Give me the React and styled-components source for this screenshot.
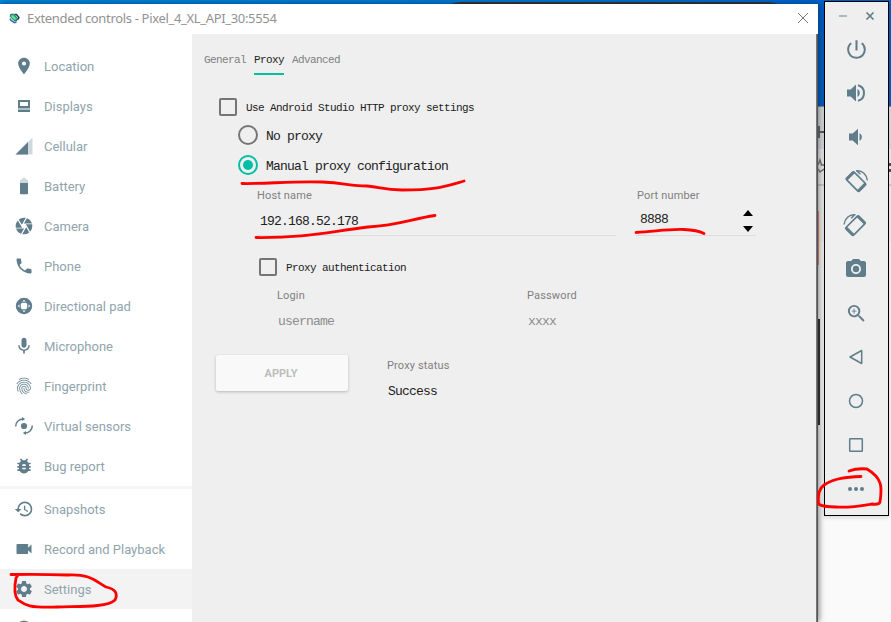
import React from 'react';
import styled, { createGlobalStyle, css } from 'styled-components';
import {
  MdLocationOn, MdCamera, MdPhone, MdMic, MdFingerprint, MdBugReport, MdHistory,
  MdVideocam, MdSettings, MdHelp, MdPhotoCamera, MdZoomIn, MdPowerSettingsNew,
} from 'react-icons/md';

const SLATE = '#607d8b';
const TEAL = '#00bfa5';

const GlobalStyle = createGlobalStyle`
  * { box-sizing: border-box; }
  body { margin: 0; overflow: hidden; font-family: Roboto, sans-serif; }
  svg { display: block; flex: none; }
`;

const Desktop = styled.main`
  position: relative;
  width: 891px;
  height: 622px;
  overflow: hidden;
  background: linear-gradient(90deg, #0085dc 0, #0078d7 55%, #0063cc 92%, #0062ca 100%);
`;

const PhoneEdge = styled.div`
  position: absolute;
  left: 450px;
  top: 2px;
  width: 328px;
  height: 20px;
  border-radius: 14px 14px 0 0 / 3px;
  background: #33383c;
`;

const BackWindow = styled.div`
  position: absolute;
  left: 816px;
  top: 106px;
  width: 75px;
  height: 516px;
  border-top: 1px solid #8b9096;
  background: linear-gradient(#dedfe4 0 42px, #f1f1f2 42px 77px, #cfcfd0 77px 79px, #f3f3f3 79px 135px, #fafafa 135px);
`;

const BackDetails = styled.svg`
  position: absolute;
  left: 0;
  top: 0;
`;

const Window = styled.section`
  position: absolute;
  left: 0;
  top: 4px;
  width: 818px;
  height: 618px;
  background: #fff;
  box-shadow: 1px 0 6px rgba(0, 0, 0, 0.5);
`;

const TitleBar = styled.header`
  display: flex;
  align-items: center;
  height: 30px;
  padding: 0 9px 2px 9px;
  gap: 7px;
`;

const Title = styled.h1`
  flex: 1;
  margin: 0;
  font: 400 13px/20px "Noto Sans", sans-serif;
  letter-spacing: -0.33px;
  color: #929292;
`;

const WindowBody = styled.div`
  display: flex;
  height: 588px;
`;

const Sidebar = styled.nav`
  width: 192px;
  padding-top: 12px;
  background: #fff;
  overflow: hidden;
`;

const NavItem = styled.div`
  display: flex;
  align-items: center;
  height: 40px;
  padding-left: 14px;
  gap: 10px;
  font-size: 13px;
  color: #90a4ae;
  background: ${(p) => (p.$active ? '#f3f3f3' : 'transparent')};
  svg { color: ${SLATE}; }
`;

const NavDivider = styled.div`
  height: 3px;
  background: #f5f5f5;
`;

const Panel = styled.div`
  width: 625px;
  height: 588px;
  padding: 16px 0 0 12px;
  background: #efefef;
  border-right: 1px solid #777;
  box-shadow: 1px 0 #505458;
`;

const bitmapText = css`
  font-family: "Liberation Mono", monospace;
  font-size: ${(p) => (p.$small ? 11 : 13)}px;
  letter-spacing: ${(p) => (p.$small ? -0.6 : -0.8)}px;
  white-space: pre;
`;

const Tabs = styled.div`
  display: flex;
  gap: 8px;
`;

const Tab = styled.div`
  ${bitmapText}
  height: 25px;
  line-height: 20px;
  color: ${(p) => (p.$active ? '#212121' : '#808080')};
  border-bottom: 2px solid ${(p) => (p.$active ? TEAL : 'transparent')};
`;

const Option = styled.label`
  display: flex;
  align-items: center;
  height: ${(p) => p.$height}px;
  gap: ${(p) => (p.$check ? 9 : 8)}px;
  margin: ${(p) => p.$top || 0}px 0 0 ${(p) => p.$indent}px;
`;

const CheckBox = styled.span`
  width: 18px;
  height: 18px;
  border: 2px solid #757575;
  border-radius: 2px;
`;

const Radio = styled.span`
  display: grid;
  place-items: center;
  width: 20px;
  height: 20px;
  border: 2px solid ${(p) => (p.$on ? TEAL : '#757575')};
  border-radius: 50%;
  &::after {
    content: '';
    width: 10px;
    height: 10px;
    border-radius: 50%;
    background: ${(p) => (p.$on ? TEAL : 'transparent')};
  }
`;

const OptionText = styled.span`
  ${bitmapText}
  line-height: 18px;
  padding-top: ${(p) => (p.$small ? 2 : 3)}px;
  color: #212121;
`;

const FieldRow = styled.div`
  display: flex;
  margin: ${(p) => p.$top}px 0 0 ${(p) => p.$indent}px;
`;

const Field = styled.div`
  width: ${(p) => p.$width}px;
  margin-right: ${(p) => p.$gap || 0}px;
`;

const FieldLabel = styled.div`
  height: 16px;
  padding-left: ${(p) => p.$inset || 0}px;
  font-size: 11px;
  line-height: 16px;
  letter-spacing: 0.15px;
  color: #808080;
`;

const FieldValue = styled.div`
  ${bitmapText}
  display: flex;
  align-items: flex-start;
  justify-content: space-between;
  height: ${(p) => (p.$line ? 32 : 28)}px;
  padding: ${(p) => p.$padTop}px 3px 0 ${(p) => p.$inset || 1}px;
  line-height: 16px;
  color: ${(p) => (p.$muted ? '#8d8d8d' : '#212121')};
  border-bottom: 1px solid ${(p) => (p.$line ? '#dcdcdc' : 'transparent')};
`;

const SpinArrows = styled.svg`
  margin-top: -2px;
`;

const ActionRow = styled.div`
  display: flex;
  margin: 23px 0 0 12px;
  gap: 39px;
`;

const ApplyButton = styled.button`
  width: 132px;
  height: 36px;
  padding: 0 2px 0 0;
  border: 0;
  border-radius: 2px;
  background: #f9f9f9;
  box-shadow: 0 1px 3px rgba(0, 0, 0, 0.24);
  font: 700 11px Roboto, sans-serif;
  color: #bdbdbd;
`;

const Status = styled.div`
  padding-top: 3px;
`;

const Toolbar = styled.aside`
  position: absolute;
  left: 824px;
  top: 1px;
  width: 65px;
  height: 515px;
  border: 1px solid #000;
  background: #efefef;
  color: ${SLATE};
  box-shadow: 0 1px 5px rgba(0, 0, 0, 0.18);
`;

const ToolbarControls = styled.div`
  display: flex;
  justify-content: space-between;
  padding: 9px 13px 0 13px;
  height: 25px;
`;

const ToolButton = styled.div`
  display: grid;
  place-items: center;
  width: 62px;
  height: 44px;
`;

const Markup = styled.svg`
  position: absolute;
  inset: 0;
  pointer-events: none;
`;

function Svg({ size = 20, children }) {
  return (
    <svg width={size} height={size} viewBox="0 0 20 20" fill="currentColor">
      {children}
    </svg>
  );
}

const DisplaysIcon = () => (
  <Svg>
    <path fillRule="evenodd" d="M4 4h12v8H4zM6 6v4h8V6z" />
    <path opacity=".5" d="M4 12h12v2H4z" />
    <path d="M4 14h12v2H4z" />
  </Svg>
);
const CellularIcon = () => (
  <Svg>
    <path opacity=".3" d="M18.500 1.500v17h-17z" />
    <path d="M14 6v12.500H1.500z" />
  </Svg>
);
const BatteryIcon = () => (
  <Svg>
    <path opacity=".3" d="M8.300 1.700h3.400v1.700H13q1 0 1 1V7H6V4.400q0-1 1-1h1.300z" />
    <path d="M6 7h8v10.300q0 1-1 1H7q-1 0-1-1z" />
  </Svg>
);
const DpadIcon = () => (
  <Svg>
    <path fillRule="evenodd" d="M10 1.800a8.200 8.200 0 1 1 0 16.400a8.200 8.200 0 0 1 0-16.400M8.400 5.500h3.200L10 3.700zM8.400 14.500h3.200L10 16.300zM5.500 8.400v3.200L3.700 10zM14.500 8.400v3.200l1.800-1.600zM8 6.800L6.800 8v4L8 13.200h4l1.200-1.200V8L12 6.800z" />
  </Svg>
);
const SensorsIcon = () => (
  <Svg>
    <circle cx="10" cy="10" r="3.100" />
    <g fill="none" stroke="currentColor" strokeWidth="1.500">
      <path d="M1.700 10.500C1.700 6 5 2.900 9.500 2.900" />
      <path d="M18.300 9.500c0 4.500-3.300 7.600-7.800 7.600" />
    </g>
    <path d="M8 .9L11.200 3.100L8 4.900zM12 15.100v4l-3.200-2.200z" />
  </Svg>
);

const LoudIcon = () => (
  <Svg>
    <path d="M1 6.500h3.600L10 1.500v17l-5.400-5H1zM11.500 6c3 1.400 3 6.600 0 8z" />
    <path d="M12 2.200c8 2.100 8 13.500 0 15.600" fill="none" stroke="currentColor" strokeWidth="2" />
  </Svg>
);
const QuietIcon = () => (
  <Svg>
    <path d="M3 6.500h3.600L12 1.800v16.400l-5.400-4.700H3zM13.500 6.200c3.200 1.400 3.200 6.200 0 7.600z" />
  </Svg>
);
const RotateIcon = ({ flip }) => (
  <svg width="26" height="26" viewBox="0 0 26 26">
    <g fill="none" stroke="currentColor" transform={flip ? 'translate(25.500 0) scale(-1 1)' : undefined}>
      <g transform="translate(13 13.600) rotate(45)">
        <rect x="-9" y="-5.400" width="18" height="10.800" rx="1.300" strokeWidth="1.700" />
        <path d="M-8.200-5.400v10.800M8.200-5.400v10.800" strokeWidth="2.800" />
      </g>
      <path d="M13 2.800c6.500-.9 10.900 4.200 11.400 9.700M13.600 2.400l3.800 3.800" strokeWidth="1.400" />
    </g>
  </svg>
);
const BackIcon = () => (
  <Svg><path d="M15.700 3.500v13L4 10z" fill="none" stroke="currentColor" strokeWidth="1.500" strokeLinejoin="round" /></Svg>
);
const HomeIcon = () => (
  <Svg><circle cx="10" cy="10" r="6.500" fill="none" stroke="currentColor" strokeWidth="1.500" /></Svg>
);
const OverviewIcon = () => (
  <Svg><rect x="3.700" y="3.700" width="12.600" height="12.600" rx=".6" fill="none" stroke="currentColor" strokeWidth="1.500" /></Svg>
);
const MoreIcon = () => (
  <Svg>
    <circle cx="4" cy="10" r="2" /><circle cx="10" cy="10" r="2" /><circle cx="16" cy="10" r="2" />
  </Svg>
);

const EmulatorLogo = () => (
  <svg width="11" height="11" viewBox="0 0 11 11">
    <path d="M5.500 1.500L7.500 1.500L10 4.500L8.500 7" fill="#dbe7f2" stroke="#183b55" strokeWidth="1.400" />
    <path d="M1 5.500L2 7.500L5.500 9.700L7.500 9" fill="none" stroke="#386dad" strokeWidth="1.600" />
    <path d="M1.500 1.500L4.500 1L8.500 5.500L7.500 8L5 7.500L1.300 3.500z" fill="#35c583" stroke="#11684e" strokeWidth=".9" />
    <path d="M3 3l3 3" stroke="#79e6af" strokeWidth="1.600" />
  </svg>
);

const primaryNav = [
  ['Location', <MdLocationOn size={20} />],
  ['Displays', <DisplaysIcon />],
  ['Cellular', <CellularIcon />],
  ['Battery', <BatteryIcon />],
  ['Camera', <MdCamera size={20} />],
  ['Phone', <MdPhone size={20} />],
  ['Directional pad', <DpadIcon />],
  ['Microphone', <MdMic size={20} />],
  ['Fingerprint', <MdFingerprint size={20} />],
  ['Virtual sensors', <SensorsIcon />],
  ['Bug report', <MdBugReport size={20} />],
];

const secondaryNav = [
  ['Snapshots', <MdHistory size={20} />],
  ['Record and Playback', <MdVideocam size={20} />],
  ['Settings', <MdSettings size={20} />],
];

const tools = [
  <MdPowerSettingsNew size={25} />, <LoudIcon />, <QuietIcon />,
  <RotateIcon />, <RotateIcon flip />, <MdPhotoCamera size={24} />,
  <MdZoomIn size={23} />, <BackIcon />, <HomeIcon />, <OverviewIcon />, <MoreIcon />,
];

function ExtendedControls() {
  return (
    <Window>
      <TitleBar>
        <EmulatorLogo />
        <Title>Extended controls - Pixel_4_XL_API_30:5554</Title>
        <svg width="12" height="12" viewBox="0 0 12 12" stroke="#777" strokeWidth="1">
          <path d="M1 1l10 10M11 1L1 11" />
        </svg>
      </TitleBar>
      <WindowBody>
        <Sidebar>
          {primaryNav.map(([label, icon]) => <NavItem key={label}>{icon}{label}</NavItem>)}
          <NavDivider />
          {secondaryNav.map(([label, icon]) => (
            <NavItem key={label} $active={label === 'Settings'}>{icon}{label}</NavItem>
          ))}
          <NavItem><MdHelp size={20} /></NavItem>
        </Sidebar>
        <Panel>
          <Tabs>
            <Tab $small>General</Tab>
            <Tab $small $active>Proxy</Tab>
            <Tab $small>Advanced</Tab>
          </Tabs>
          <Option $check $height={18} $top={23} $indent={15}>
            <CheckBox /><OptionText $small>Use Android Studio HTTP proxy settings</OptionText>
          </Option>
          <Option $height={20} $top={9} $indent={34}>
            <Radio /><OptionText>No proxy</OptionText>
          </Option>
          <Option $height={20} $top={10} $indent={34}>
            <Radio $on /><OptionText>Manual proxy configuration</OptionText>
          </Option>
          <FieldRow $top={13} $indent={53}>
            <Field $width={359} $gap={20}>
              <FieldLabel>Host name</FieldLabel>
              <FieldValue $line $padTop={10} $inset={3}>192.168.52.178</FieldValue>
            </Field>
            <Field $width={120}>
              <FieldLabel $inset={1}>Port number</FieldLabel>
              <FieldValue $line $padTop={8} $inset={4}>
                8888
                <SpinArrows width="10" height="23" viewBox="0 0 10 23">
                  <path d="M5 0l5 6H0zM0 16h10l-5 6z" />
                </SpinArrows>
              </FieldValue>
            </Field>
          </FieldRow>
          <Option $check $height={18} $top={22} $indent={55}>
            <CheckBox /><OptionText $small>Proxy authentication</OptionText>
          </Option>
          <FieldRow $top={12} $indent={73}>
            <Field $width={250}>
              <FieldLabel>Login</FieldLabel>
              <FieldValue $muted $padTop={10}>username</FieldValue>
            </Field>
            <Field $width={120}>
              <FieldLabel>Password</FieldLabel>
              <FieldValue $muted $padTop={10}>xxxx</FieldValue>
            </Field>
          </FieldRow>
          <ActionRow>
            <ApplyButton>APPLY</ApplyButton>
            <Status>
              <FieldLabel>Proxy status</FieldLabel>
              <FieldValue $padTop={10}>Success</FieldValue>
            </Status>
          </ActionRow>
        </Panel>
      </WindowBody>
    </Window>
  );
}

export default function App() {
  return (
    <Desktop>
      <GlobalStyle />
      <PhoneEdge />
      <BackWindow />
      <ExtendedControls />
      <BackDetails width="891" height="622">
        <path d="M818 132h6M819 126v12" stroke="#555" strokeWidth="2" />
        <path d="M818 165l2-5 1.500 5h2.500M824 169l-4 3-2-3" stroke="#666" strokeWidth="1.500" fill="none" />
        <path d="M818.500 211v54" stroke="#b96750" />
        <path d="M819 319v106" stroke="#292929" strokeWidth="2" />
        <path d="M889 163h2v3h-2zM889 169h2v3h-2z" fill="#555" />
      </BackDetails>
      <Toolbar>
        <ToolbarControls>
          <svg width="10" height="10" viewBox="0 0 10 10"><path d="M1 5h8" stroke="#a9bbc2" strokeWidth="2" /></svg>
          <svg width="10" height="10" viewBox="0 0 10 10"><path d="M1.500 1.500l7 7M8.500 1.500l-7 7" stroke={SLATE} strokeWidth="1.700" /></svg>
        </ToolbarControls>
        {tools.map((icon, i) => <ToolButton key={i}>{icon}</ToolButton>)}
      </Toolbar>
      <Markup width="891" height="622" viewBox="0 0 891 622" fill="none" stroke="#f00" strokeWidth="2.800" strokeLinecap="round" strokeLinejoin="round">
        <path d="M242 183.500C267 184 290 181 322 182C345 183 350 186 367 186C381 187 383 190 402 190C436 190 443 187 464 181" />
        <path d="M256 237.500C304 238 327 232 368 227C399 225 411 219 435 215.500" />
        <path d="M636 232.500C654 232 664 229 684 229.500Q697 230 704 233.500" />
        <path d="M11 574.500C35 574 43 574 68 575C91 574 95 581 106 587C116 589 118 594 115 600C107 608 75 606 57 607C29 608 25 605 18 600C13 594 15 583 16 578L18 575" />
        <path d="M849 471Q857 468 867 469C872 472 878 477 880 483Q882 488 880 502Q879 505 872 504C860 506 849 508 836 507Q823 507 818.500 504Q817 490 824 485C834 478 847 477 861 476.500" />
      </Markup>
    </Desktop>
  );
}
